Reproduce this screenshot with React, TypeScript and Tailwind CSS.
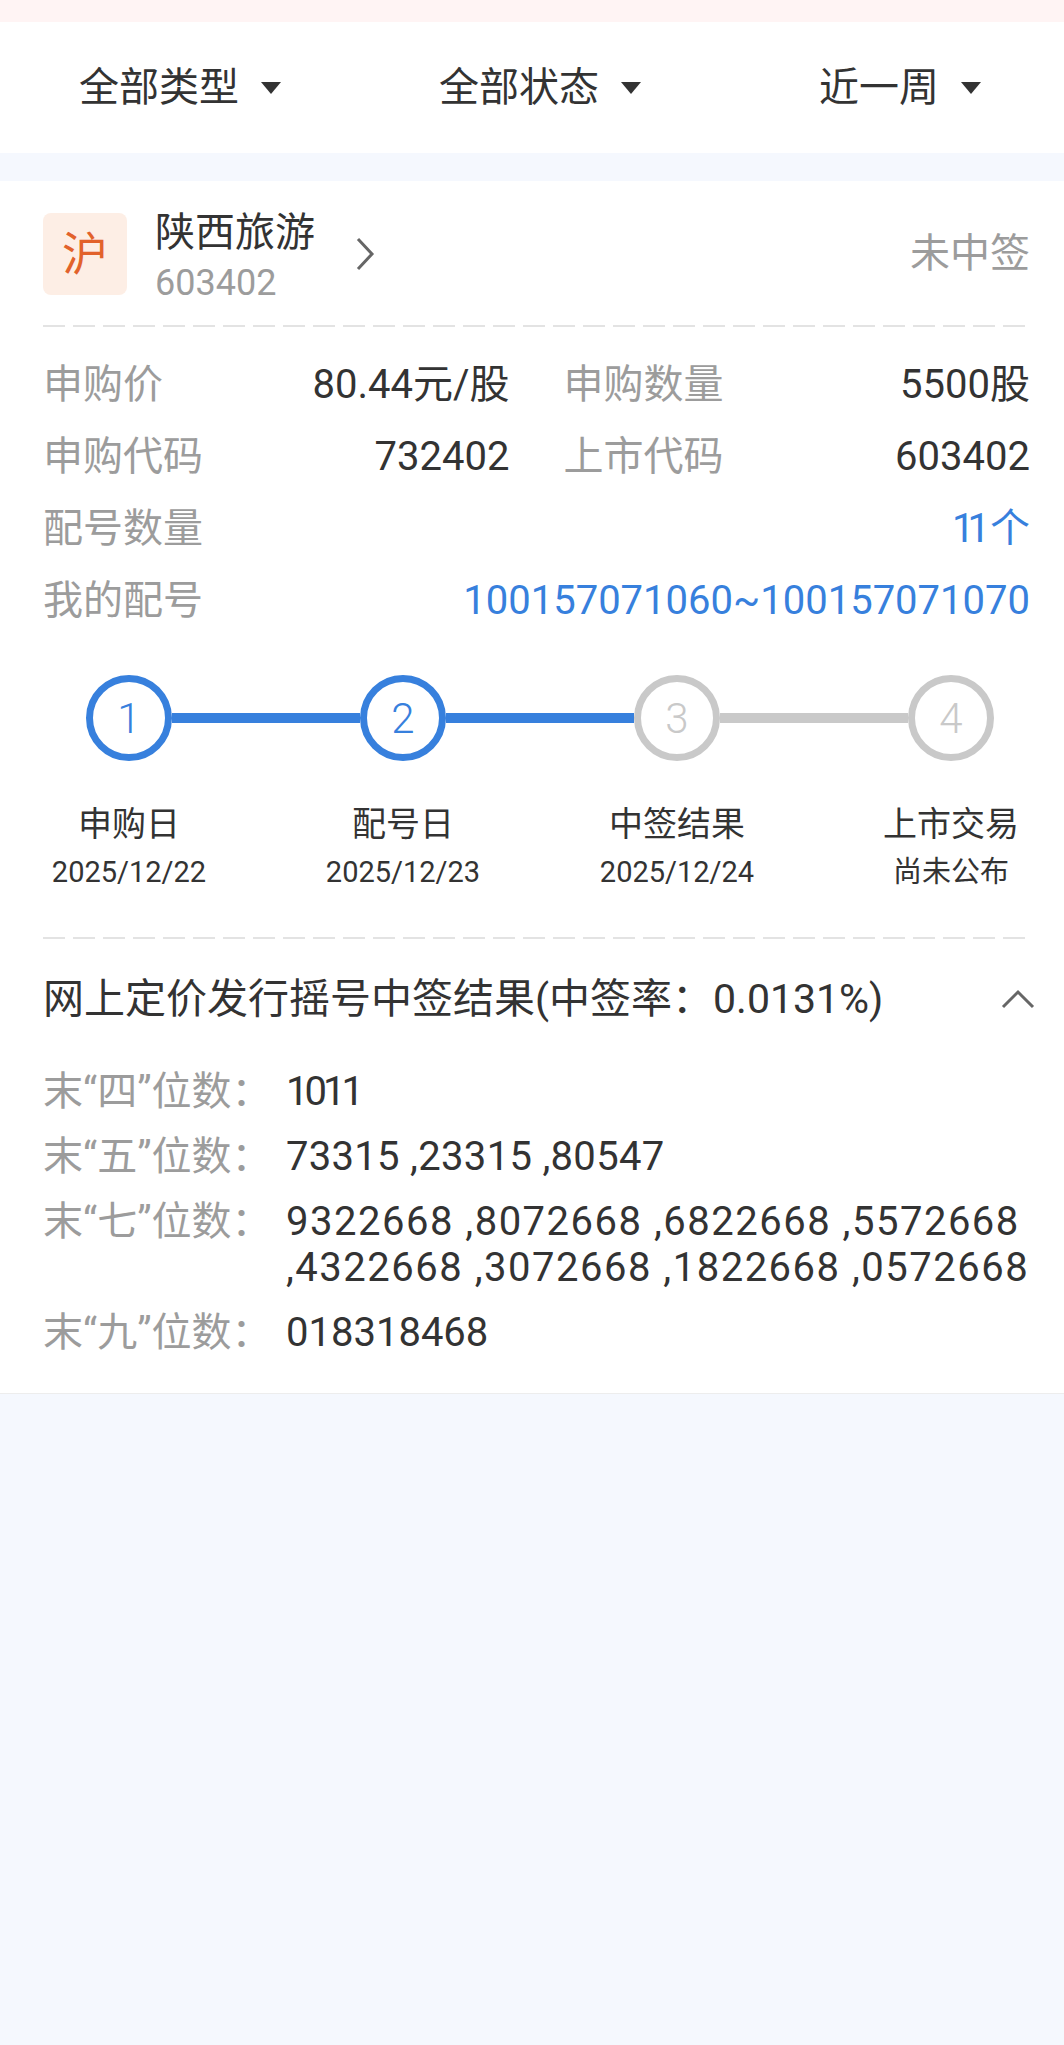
import React from "react";

const filters = ["全部类型", "全部状态", "近一周"];

const steps = [
  { n: "1", label: "申购日", date: "2025/12/22", done: true },
  { n: "2", label: "配号日", date: "2025/12/23", done: true },
  { n: "3", label: "中签结果", date: "2025/12/24", done: false },
  { n: "4", label: "上市交易", date: "尚未公布", done: false },
];

const results = [
  { label: "末“四”位数：", lines: ["1011"], cls: "tracking-[-4px]" },
  { label: "末“五”位数：", lines: ["73315 ,23315 ,80547"], cls: "tracking-[0.3px]" },
  {
    label: "末“七”位数：",
    lines: ["9322668 ,8072668 ,6822668 ,5572668", ",4322668 ,3072668 ,1822668 ,0572668"],
    cls: "tracking-[1.5px]",
  },
  { label: "末“九”位数：", lines: ["018318468"], cls: "" },
];

const Dashed = () => (
  <div className="h-[2px] w-full bg-[repeating-linear-gradient(to_right,#e3e3e3_0_22px,transparent_22px_30px)]" />
);

const Circle = ({ n, done }: { n: string; done: boolean }) => (
  <div
    className={
      done
        ? "w-[86px] h-[86px] shrink-0 rounded-full border-[7px] border-[#3780dd] flex items-center justify-center text-[42px] font-light text-[#3780dd]"
        : "w-[86px] h-[86px] shrink-0 rounded-full border-[7px] border-[#c9c9c9] flex items-center justify-center text-[42px] font-light text-[#c9c9c9]"
    }
  >
    {n}
  </div>
);

export default function App() {
  return (
    <div className="min-h-[2045px] bg-[#f5f8fe] font-[Roboto,'Noto_Sans_CJK_SC',sans-serif] text-[#333333]">
      <div className="h-[22px] bg-[#fff4f4]" />

      {/* filter bar */}
      <div className="h-[131px] bg-white flex items-center overflow-hidden">
        {filters.map((f) => (
          <div key={f} className="w-[360px] shrink-0 flex items-center justify-center gap-[22px]">
            <span className="text-[40px] leading-none">{f}</span>
            <svg width="20" height="12" viewBox="0 0 20 12">
              <polygon points="0,0 20,0 10,12" fill="#333333" />
            </svg>
          </div>
        ))}
      </div>

      <div className="mt-[28px] bg-white border-b border-[#ededed] pb-[37px] overflow-hidden">
        {/* header */}
        <div className="pl-[43px] pr-[34px] pt-[32px]">
          <div className="flex items-center h-[82px]">
            <div className="w-[84px] h-[82px] rounded-[8px] bg-[#fdeee5] flex items-center justify-center text-[46px] text-[#e2622b]">
              沪
            </div>
            <div className="ml-[28px] pt-[8px] flex flex-col">
              <span className="text-[40px] leading-[46px] text-[#333333]">陕西旅游</span>
              <span className="text-[36px] leading-[46px] mt-[4px] text-[#9c9c9c]">603402</span>
            </div>
            <svg className="ml-[40px]" width="20" height="34" viewBox="0 0 20 34">
              <polyline points="3,2 17,17 3,32" fill="none" stroke="#666666" strokeWidth="3" />
            </svg>
            <span className="ml-auto text-[40px] text-[#9c9c9c]">未中签</span>
          </div>
          <div className="mt-[30px]">
            <Dashed />
          </div>

          {/* info */}
          <div className="mt-[22px] text-[40px] leading-[72px]">
            <div className="grid grid-cols-2 gap-x-[54px]">
              <div className="flex justify-between">
                <span className="text-[#9c9c9c]">申购价</span>
                <span>80.44元/股</span>
              </div>
              <div className="flex justify-between">
                <span className="text-[#9c9c9c]">申购数量</span>
                <span>5500股</span>
              </div>
              <div className="flex justify-between">
                <span className="text-[#9c9c9c]">申购代码</span>
                <span>732402</span>
              </div>
              <div className="flex justify-between">
                <span className="text-[#9c9c9c]">上市代码</span>
                <span>603402</span>
              </div>
            </div>
            <div className="flex justify-between">
              <span className="text-[#9c9c9c]">配号数量</span>
              <span className="text-[#3780dd]">
                <span className="tracking-[-7px] mr-[7px]">11</span>个
              </span>
            </div>
            <div className="flex justify-between">
              <span className="text-[#9c9c9c]">我的配号</span>
              <span className="text-[#3780dd]">100157071060~100157071070</span>
            </div>
          </div>
        </div>

        {/* steps */}
        <div className="mt-[38px]">
          <div className="ml-[86px] mr-[70px] flex items-center">
            {steps.map((s, i) => (
              <React.Fragment key={s.n}>
                <Circle n={s.n} done={s.done} />
                {i < steps.length - 1 && (
                  <div
                    className={
                      i < 2 ? "flex-1 h-[10px] bg-[#3780dd]" : "flex-1 h-[10px] bg-[#c9c9c9]"
                    }
                  />
                )}
              </React.Fragment>
            ))}
          </div>
          <div className="mt-[41px] pl-[19px] flex gap-[54px]">
            {steps.map((s) => (
              <div key={s.n} className="w-[220px] shrink-0 flex flex-col items-center">
                <span className="text-[34px] leading-[44px]">{s.label}</span>
                <span className="mt-[6px] text-[29px] leading-[40px]">{s.date}</span>
              </div>
            ))}
          </div>
        </div>

        {/* results */}
        <div className="pl-[43px] pr-[34px]">
          <div className="mt-[45px]">
            <Dashed />
          </div>
          <div className="mt-[35px] flex items-center justify-between h-[50px]">
            <span className="text-[41px] leading-[50px]">网上定价发行摇号中签结果(中签率：0.0131%)</span>
            <svg className="-mr-[5px]" width="34" height="22" viewBox="0 0 34 22">
              <polyline points="2,19 17,4 32,19" fill="none" stroke="#666666" strokeWidth="3" />
            </svg>
          </div>
          <div className="mt-[45px] flex flex-col gap-[19px] text-[40px] leading-[46px]">
            {results.map((r) => (
              <div key={r.label} className="flex">
                <span className="w-[243px] shrink-0 text-[#9c9c9c]">{r.label}</span>
                <div className={"flex flex-col " + r.cls}>
                  {r.lines.map((l) => (
                    <span key={l} className="whitespace-nowrap">
                      {l}
                    </span>
                  ))}
                </div>
              </div>
            ))}
          </div>
        </div>
      </div>
    </div>
  );
}
